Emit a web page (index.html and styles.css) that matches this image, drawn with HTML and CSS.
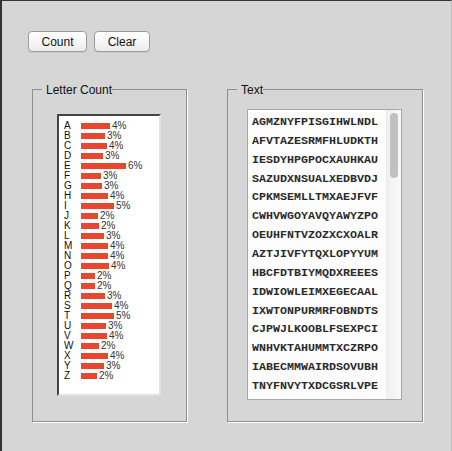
FILE: index.html
```html
<!DOCTYPE html>
<html>
<head>
<meta charset="utf-8">
<title>Letter Count</title>
<link rel="stylesheet" href="styles.css">
</head>
<body>
<div class="window">
  <div class="toolbar">
    <button class="btn btn-count">Count</button>
    <button class="btn btn-clear">Clear</button>
  </div>
  <div class="panels">
    <fieldset class="group group-count">
      <legend>Letter Count</legend>
      <div class="listbox">
        <div class="row"><span class="letter">A</span><span class="bar" style="width:29px"></span><span class="pct">4%</span></div>
        <div class="row"><span class="letter">B</span><span class="bar" style="width:24px"></span><span class="pct">3%</span></div>
        <div class="row"><span class="letter">C</span><span class="bar" style="width:26px"></span><span class="pct">4%</span></div>
        <div class="row"><span class="letter">D</span><span class="bar" style="width:22px"></span><span class="pct">3%</span></div>
        <div class="row"><span class="letter">E</span><span class="bar" style="width:45px"></span><span class="pct">6%</span></div>
        <div class="row"><span class="letter">F</span><span class="bar" style="width:20px"></span><span class="pct">3%</span></div>
        <div class="row"><span class="letter">G</span><span class="bar" style="width:21px"></span><span class="pct">3%</span></div>
        <div class="row"><span class="letter">H</span><span class="bar" style="width:27px"></span><span class="pct">4%</span></div>
        <div class="row"><span class="letter">I</span><span class="bar" style="width:33px"></span><span class="pct">5%</span></div>
        <div class="row"><span class="letter">J</span><span class="bar" style="width:17px"></span><span class="pct">2%</span></div>
        <div class="row"><span class="letter">K</span><span class="bar" style="width:18px"></span><span class="pct">2%</span></div>
        <div class="row"><span class="letter">L</span><span class="bar" style="width:23px"></span><span class="pct">3%</span></div>
        <div class="row"><span class="letter">M</span><span class="bar" style="width:27px"></span><span class="pct">4%</span></div>
        <div class="row"><span class="letter">N</span><span class="bar" style="width:27px"></span><span class="pct">4%</span></div>
        <div class="row"><span class="letter">O</span><span class="bar" style="width:28px"></span><span class="pct">4%</span></div>
        <div class="row"><span class="letter">P</span><span class="bar" style="width:14px"></span><span class="pct">2%</span></div>
        <div class="row"><span class="letter">Q</span><span class="bar" style="width:14px"></span><span class="pct">2%</span></div>
        <div class="row"><span class="letter">R</span><span class="bar" style="width:24px"></span><span class="pct">3%</span></div>
        <div class="row"><span class="letter">S</span><span class="bar" style="width:31px"></span><span class="pct">4%</span></div>
        <div class="row"><span class="letter">T</span><span class="bar" style="width:33px"></span><span class="pct">5%</span></div>
        <div class="row"><span class="letter">U</span><span class="bar" style="width:25px"></span><span class="pct">3%</span></div>
        <div class="row"><span class="letter">V</span><span class="bar" style="width:26px"></span><span class="pct">4%</span></div>
        <div class="row"><span class="letter">W</span><span class="bar" style="width:18px"></span><span class="pct">2%</span></div>
        <div class="row"><span class="letter">X</span><span class="bar" style="width:27px"></span><span class="pct">4%</span></div>
        <div class="row"><span class="letter">Y</span><span class="bar" style="width:23px"></span><span class="pct">3%</span></div>
        <div class="row"><span class="letter">Z</span><span class="bar" style="width:16px"></span><span class="pct">2%</span></div>
      </div>
    </fieldset>
    <fieldset class="group group-text">
      <legend>Text</legend>
      <div class="textarea">
        <div class="text-lines">
          <div class="line">AGMZNYFPISGIHWLNDL</div>
          <div class="line">AFVTAZESRMFHLUDKTH</div>
          <div class="line">IESDYHPGPOCXAUHKAU</div>
          <div class="line">SAZUDXNSUALXEDBVDJ</div>
          <div class="line">CPKMSEMLLTMXAEJFVF</div>
          <div class="line">CWHVWGOYAVQYAWYZPO</div>
          <div class="line">OEUHFNTVZOZXCXOALR</div>
          <div class="line">AZTJIVFYTQXLOPYYUM</div>
          <div class="line">HBCFDTBIYMQDXREEES</div>
          <div class="line">IDWIOWLEIMXEGECAAL</div>
          <div class="line">IXWTONPURMRFOBNDTS</div>
          <div class="line">CJPWJLKOOBLFSEXPCI</div>
          <div class="line">WNHVKTAHUMMTXCZRPO</div>
          <div class="line">IABECMMWAIRDSOVUBH</div>
          <div class="line">TNYFNVYTXDCGSRLVPE</div>
        </div>
        <div class="scrollbar"><div class="thumb"></div></div>
      </div>
    </fieldset>
  </div>
</div>
</body>
</html>
```
FILE: styles.css
```css
html, body {
  margin: 0;
  padding: 0;
}
body {
  width: 452px;
  height: 451px;
  overflow: hidden;
  background: #d6d6d6;
  font-family: "Liberation Sans", Arial, sans-serif;
}
.window {
  box-sizing: border-box;
  width: 452px;
  height: 451px;
  background: #d6d6d6;
  border-top: 1px solid #333;
  border-left: 2px solid #333;
  border-right: 1px solid #bcbcbc;
  padding: 30px 0 0 26px;
}
.toolbar {
  display: flex;
  gap: 7px;
  height: 21px;
}
.btn {
  box-sizing: border-box;
  height: 21px;
  padding: 0;
  border: 1px solid #9c9c9c;
  border-radius: 4px;
  background: linear-gradient(#ffffff, #f6f6f6 55%, #ebebeb);
  font: 12px "Liberation Sans", Arial, sans-serif;
  color: #111;
  box-shadow: 0 1px 0 rgba(0, 0, 0, 0.06);
}
.btn-count { width: 59px; }
.btn-clear { width: 56px; }
.panels {
  display: flex;
  gap: 40px;
  margin: 30px 0 0 4px;
}
.group {
  box-sizing: border-box;
  margin: 0;
  padding: 0;
  min-width: 0;
  height: 340px;
  border: 1px solid #8e8e8e;
  box-shadow: 1px 1px 0 #fff;
}
.group legend {
  margin-left: 9px;
  padding: 1px 0 0 4px;
  font-size: 12px;
  line-height: 14px;
  color: #111;
}
.group-count { width: 155px; }
.group-text { width: 196px; }
.listbox {
  box-sizing: border-box;
  width: 104px;
  height: 282px;
  margin: 17px 0 0 24px;
  border-style: solid;
  border-width: 2px;
  border-color: #444 #e2e2e2 #e2e2e2 #444;
  background: #fff;
  padding: 5px 0 0 5px;
}
.row {
  display: flex;
  align-items: center;
  height: 10px;
  font-size: 10px;
  line-height: 10px;
}
.letter {
  width: 17px;
  color: #111;
}
.bar {
  height: 6px;
  background: #e8472f;
}
.pct {
  margin-left: 2px;
  color: #333;
}
.textarea {
  box-sizing: border-box;
  display: flex;
  width: 155px;
  height: 291px;
  margin: 12px 0 0 19px;
  border: 1px solid #a8a8a8;
  background: #fdfdfd;
}
.text-lines {
  flex: 1;
  overflow: hidden;
  padding: 3px 0 0 4px;
  font: bold 11.67px/18.86px "Liberation Mono", "Courier New", monospace;
  color: #2a2a2a;
}
.line {
  white-space: nowrap;
}
.scrollbar {
  box-sizing: border-box;
  width: 15px;
  padding: 3px 0 0 3px;
  border-left: 1px solid #ececec;
  background: linear-gradient(to right, #f0f0f0, #fafafa);
}
.thumb {
  width: 8px;
  height: 65px;
  border-radius: 4px;
  background: #c1c1c1;
}
```
